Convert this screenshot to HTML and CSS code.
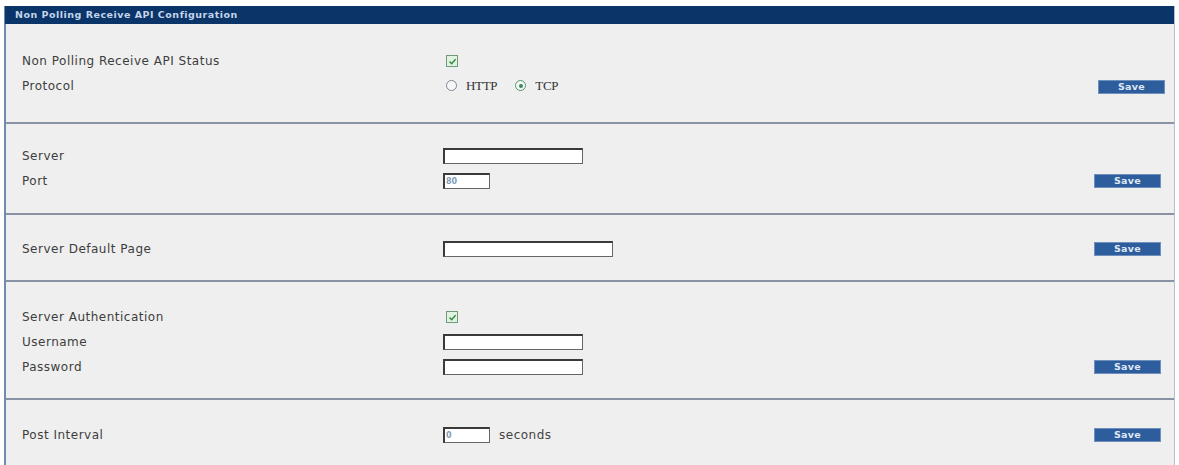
FILE: index.html
```html
<!DOCTYPE html>
<html lang="en">
<head>
    <meta charset="UTF-8">
    <title>Non Polling Receive API Configuration</title>
    <link rel="stylesheet" href="styles.css">
</head>
<body>
    <div class="panel">
        <div class="panel-title">Non Polling Receive API Configuration</div>

        <!-- Статус и протокол -->
        <div class="section sec-status">
            <div class="rows">
                <div class="row">
                    <span class="label">Non Polling Receive API Status</span>
                    <span class="ctrl">
                        <span class="check"><svg viewBox="0 0 11 11" width="11" height="11"><path d="M2.5 5.6 L4.6 7.7 L8.6 3.2" fill="none" stroke="#2f8a3a" stroke-width="1.4"/></svg></span>
                    </span>
                </div>
                <div class="row">
                    <span class="label">Protocol</span>
                    <span class="ctrl">
                        <span class="radio"></span><span class="radio-text">HTTP</span>
                        <span class="radio radio-on"></span><span class="radio-text">TCP</span>
                    </span>
                </div>
            </div>
            <button class="save save-first">Save</button>
        </div>

        <!-- Сервер и порт -->
        <div class="section sec-server">
            <div class="rows">
                <div class="row">
                    <span class="label">Server</span>
                    <span class="ctrl"><input class="field field-long" type="text"></span>
                </div>
                <div class="row">
                    <span class="label">Port</span>
                    <span class="ctrl"><input class="field field-short" type="text" value="80"></span>
                </div>
            </div>
            <button class="save">Save</button>
        </div>

        <!-- Страница по умолчанию -->
        <div class="section sec-page">
            <div class="rows">
                <div class="row">
                    <span class="label">Server Default Page</span>
                    <span class="ctrl"><input class="field field-wide" type="text"></span>
                </div>
            </div>
            <button class="save">Save</button>
        </div>

        <!-- Авторизация -->
        <div class="section sec-auth">
            <div class="rows">
                <div class="row">
                    <span class="label">Server Authentication</span>
                    <span class="ctrl">
                        <span class="check"><svg viewBox="0 0 11 11" width="11" height="11"><path d="M2.5 5.6 L4.6 7.7 L8.6 3.2" fill="none" stroke="#2f8a3a" stroke-width="1.4"/></svg></span>
                    </span>
                </div>
                <div class="row">
                    <span class="label">Username</span>
                    <span class="ctrl"><input class="field field-long" type="text"></span>
                </div>
                <div class="row">
                    <span class="label">Password</span>
                    <span class="ctrl"><input class="field field-long" type="password"></span>
                </div>
            </div>
            <button class="save">Save</button>
        </div>

        <!-- Интервал -->
        <div class="section sec-interval">
            <div class="rows">
                <div class="row">
                    <span class="label">Post Interval</span>
                    <span class="ctrl"><input class="field field-short" type="text" value="0"><span class="unit">seconds</span></span>
                </div>
            </div>
            <button class="save">Save</button>
        </div>
    </div>
</body>
</html>
```

FILE: styles.css
```css
* {
    margin: 0;
    padding: 0;
    box-sizing: border-box;
}

html, body {
    background: #ffffff;
    font-family: 'DejaVu Sans', Verdana, sans-serif;
    font-size: 12px;
    color: #333;
    overflow: hidden;
}

/* Панель */
.panel {
    margin: 6px 4px 0 4px;
    background: #efefef;
    border-left: 2px solid #6e8bb0;
    border-right: 1px solid #b9bcc4;
    height: 470px;
}

.panel-title {
    background: #0b3468;
    color: #c3d5ea;
    font-size: 9.5px;
    font-weight: bold;
    letter-spacing: 0.5px;
    height: 18px;
    line-height: 18px;
    padding-left: 10px;
    margin-left: -1px;
}

/* Секции */
.section {
    display: flex;
    align-items: flex-end;
    border-bottom: 2px solid #8a93a6;
    padding: 0 13px 20px 16px;
}

.sec-status { padding-top: 24px; padding-bottom: 24px; }
.sec-server { padding-top: 19px; padding-bottom: 20px; }
.sec-page { padding-top: 21px; padding-bottom: 19px; }
.sec-auth { padding-top: 22px; padding-bottom: 19px; }
.sec-interval { padding-top: 22px; border-bottom: none; }

.rows {
    flex: 1;
}

.row {
    display: flex;
    align-items: center;
    height: 25px;
}

.label {
    width: 421px;
    color: #3d3d3d;
    letter-spacing: 0.5px;
}

.ctrl {
    display: flex;
    align-items: center;
}

/* Чекбокс */
.check {
    display: inline-block;
    width: 12px;
    height: 12px;
    margin-left: 3px;
    border: 1px solid #6f9a7a;
    background: #e2f2e2;
    position: relative;
}

.check svg {
    position: absolute;
    left: 0;
    top: 0;
}

/* Радио */
.radio {
    display: inline-block;
    width: 11px;
    height: 11px;
    margin-left: 3px;
    border: 1px solid #7b8796;
    border-radius: 50%;
    background: #f7f7f7;
    position: relative;
}

.radio-on {
    margin-left: 18px;
    border-color: #4a9a6a;
}

.radio-on::after {
    content: '';
    position: absolute;
    left: 2.5px;
    top: 2.5px;
    width: 4px;
    height: 4px;
    border-radius: 50%;
    background: #3c8a5a;
}

.radio-text {
    margin-left: 9px;
    font-family: 'Liberation Serif', serif;
    font-size: 13px;
    letter-spacing: -0.3px;
    color: #333;
}

/* Поля */
.field {
    height: 16px;
    border: 1px solid #444;
    border-top: 2px solid #3a3a3a;
    border-left: 2px solid #3a3a3a;
    border-right-color: #666;
    border-bottom-color: #666;
    background: #fff;
    font-family: 'DejaVu Sans', sans-serif;
    font-size: 8px;
    font-weight: bold;
    color: #7f9cb8;
    padding: 0 1px;
}

.field-long { width: 140px; }
.field-wide { width: 170px; }
.field-short { width: 47px; }

.unit {
    margin-left: 9px;
    color: #444;
    letter-spacing: 0.5px;
}

/* Кнопка сохранения */
.save {
    width: 67px;
    height: 14px;
    margin-bottom: 5px;
    background: #2d5d9c;
    border: 1px solid #6f8fbd;
    color: #dfe8f4;
    font-family: 'DejaVu Sans', sans-serif;
    font-size: 9.5px;
    font-weight: bold;
    letter-spacing: 0.3px;
    line-height: 12px;
    cursor: pointer;
}

.save-first {
    margin-right: -4px;
    margin-bottom: 4px;
}
```
